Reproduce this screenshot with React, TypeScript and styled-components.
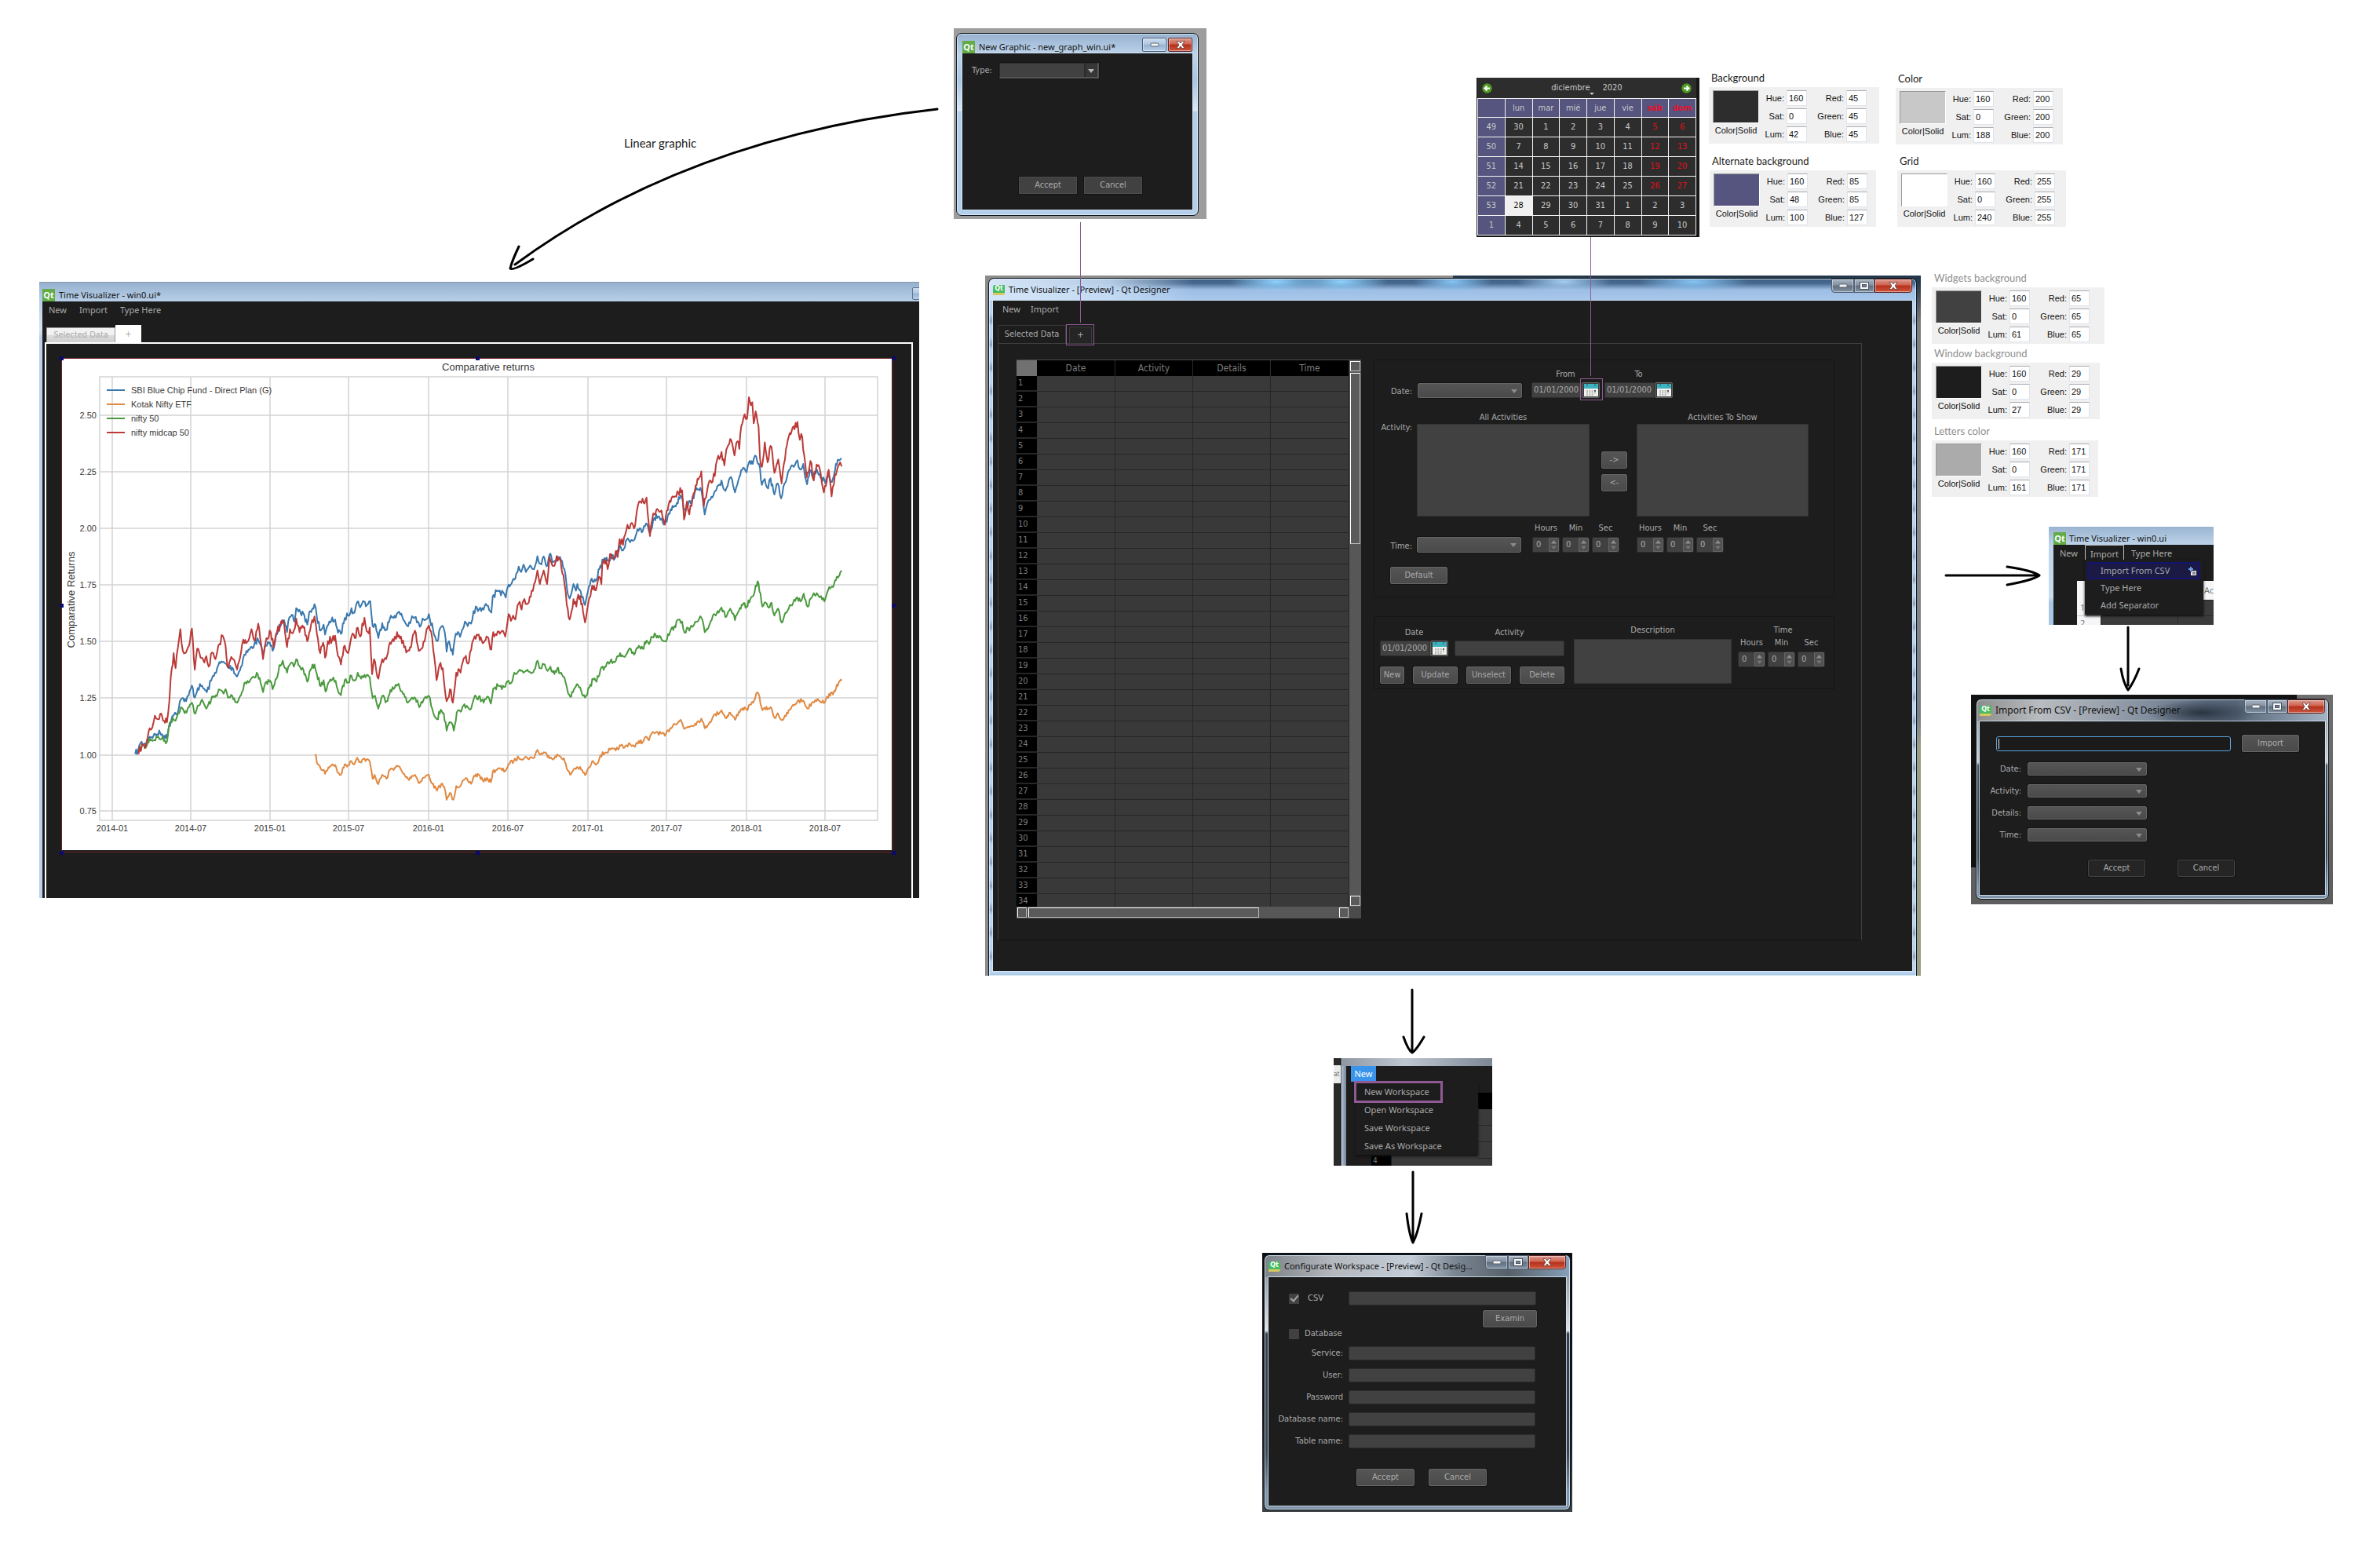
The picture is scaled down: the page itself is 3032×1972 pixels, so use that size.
import React from 'react';
import styled, { createGlobalStyle, css } from 'styled-components';

/* ---------- tokens ---------- */
const ink = '#ababab';
const base = '#1d1d1d';
const widget = '#414141';
const mark = '#8f5a93';
const tahoma = `'DejaVu Sans Condensed', 'Noto Sans', sans-serif`;
const segoe = `'Noto Sans', 'Open Sans', sans-serif`;
const verdana = `'DejaVu Sans', sans-serif`;
const arial = `'Liberation Sans', Arial, sans-serif`;
const calibri = `Lato, 'Noto Sans', sans-serif`;

const Global = createGlobalStyle`
  * { box-sizing: border-box; }
  body { margin: 0; background: #fff; font-family: ${tahoma}; font-size: 11px; line-height: 16px; }
  button, input, select, textarea { font: inherit; margin: 0; padding: 0; border-radius: 0; outline: none; }
`;

const Board = styled.main`
  position: relative;
  min-height: 100vh;
  overflow: hidden;
`;

const Pin = styled.section<{ $x: number; $y: number; $w?: number }>`
  position: absolute;
  left: ${p => p.$x}px;
  top: ${p => p.$y}px;
  ${p => p.$w && `width: ${p.$w}px;`}
`;

const Arrows = styled.svg`
  position: absolute;
  left: 0;
  top: 0;
  width: 100%;
  height: 100%;
  overflow: visible;
  pointer-events: none;
`;

const Highlight = styled.div<{ $x: number; $y: number; $w: number; $h: number; $line?: number }>`
  position: absolute;
  left: ${p => p.$x}px;
  top: ${p => p.$y}px;
  width: ${p => p.$w}px;
  height: ${p => p.$h}px;
  border: ${p => p.$line || 1}px solid ${mark};
  pointer-events: none;
`;

const Note = styled.p<{ $tone?: string; $size?: number }>`
  margin: 0;
  font-family: ${calibri};
  font-size: ${p => p.$size || 13}px;
  line-height: 20px;
  color: ${p => p.$tone || '#1b1b1b'};
  white-space: nowrap;
`;

/* ---------- window chrome ---------- */
type Glass = 'blue' | 'wide' | 'smoke' | 'steel';

const glass: Record<Glass, ReturnType<typeof css>> = {
  blue: css`background: linear-gradient(#96b1cf 0, #bdd3ea 26px, #a9c6e4 60px, #dbe8f6 98px, #b5cfea 99px, #b5cfea);`,
  wide: css`background:
    radial-gradient(60px 14px at 31% 4px, #8fd2ff, transparent),
    radial-gradient(60px 14px at 38% 4px, #8fd2ff, transparent),
    radial-gradient(50px 14px at 50% 4px, #86c4f4, transparent),
    radial-gradient(60px 14px at 62% 4px, #a5cdf3, transparent),
    radial-gradient(70px 14px at 76% 4px, #86c4f4, transparent),
    linear-gradient(90deg, #d6e6f8 0, rgba(200,222,245,.85) 13%, transparent 22%) 0 0 / 100% 28px no-repeat,
    linear-gradient(#3f5f82 0, #47698f 6px, #9dbde3 14px, #a9c8ec 28px) 0 0 / 100% 28px no-repeat,
    repeating-linear-gradient(#b9d4f1 0, #b9d4f1 14px, #8a9fbc 24px, #b9d4f1 30px);`,
  smoke: css`background:
    radial-gradient(70px 16px at 64% 17px, #2b3542, transparent),
    linear-gradient(90deg, #8c8c8c 0, #b9bcc0 18%, #8a95a3 45%, #5b6b7f 66%, #566578 74%, #a5b5c6 100%) 0 0 / 100% 28px no-repeat,
    linear-gradient(#8f98a2 0, #c9ced4 80px, #47525f 84px, #3b4653 200px, #7e93a8 240px);`,
  steel: css`background:
    linear-gradient(90deg, #7d8288 0, #b4b8bd 22%, #c4cdd8 48%, #7b8793 62%, #566069 80%, #87a0bb 100%) 0 0 / 100% 28px no-repeat,
    linear-gradient(#7b828a 0, #e0e2e5 96px, #35404c 100px, #38444f 250px, #7f93a9 300px);`,
};

const Backdrop = styled.div<{ $pad: string; $bg: string }>`
  padding: ${p => p.$pad};
  background: ${p => p.$bg};
`;

const Frame = styled.article<{ $glass: Glass; $side: number; $foot: number; $open?: boolean }>`
  border: 1px solid #10161c;
  ${p => p.$open && 'border-bottom: 0;'}
  border-radius: ${p => (p.$open ? '7px 7px 0 0' : '7px')};
  padding: 0 ${p => p.$side}px ${p => p.$foot}px;
  ${p => glass[p.$glass]}
  box-shadow: inset 0 0 0 1px rgba(225, 244, 255, 0.75);
`;

const TitleBar = styled.header<{ $h: number; $low?: boolean }>`
  display: flex;
  align-items: ${p => (p.$low ? 'flex-end' : 'center')};
  gap: 5px;
  height: ${p => p.$h}px;
`;

const Title = styled.h2<{ $size?: number }>`
  flex: 1;
  min-width: 0;
  margin: 0;
  font-family: ${segoe};
  font-size: ${p => p.$size || 12}px;
  font-weight: 400;
  line-height: 16px;
  color: #111;
  white-space: nowrap;
`;

const Client = styled.div<{ $h?: number; $font?: string }>`
  min-height: ${p => p.$h || 0}px;
  background: ${base};
  color: ${ink};
  font-family: ${p => p.$font || tahoma};
  box-shadow: 0 0 0 1px rgba(215, 233, 246, 0.8);
`;

const QtBadge = styled.span`
  display: grid;
  place-items: center;
  width: 16px;
  height: 16px;
  background: #62ab46;
  color: #fff;
  font: 700 11px/16px ${segoe};
`;

const PreviewBadge = styled.span`
  display: grid;
  place-items: center;
  width: 15px;
  height: 13px;
  border-radius: 3px 0 3px 0;
  border-bottom: 3px solid #d8c95e;
  background: #45bd62;
  color: #fff;
  font: 700 8px/10px ${verdana};
`;

const Controls = styled.div<{ $joined?: boolean }>`
  display: flex;
  align-self: flex-start;
  gap: ${p => (p.$joined ? 0 : 2)}px;
  margin-top: ${p => (p.$joined ? 0 : 5)}px;
`;

const CtlButton = styled.button<{ $w: number; $kind: 'plain' | 'pale' | 'close'; $edge?: 'l' | 'r' | 'all' }>`
  display: grid;
  place-items: center;
  width: ${p => p.$w}px;
  height: 18px;
  border: 1px solid ${p => (p.$kind === 'close' ? '#5d2420' : '#4d5f75')};
  border-radius: ${p => (p.$edge === 'all' ? '2px' : p.$edge === 'l' ? '0 0 0 4px' : p.$edge === 'r' ? '0 0 4px 0' : '0')};
  box-shadow: inset 0 0 0 1px rgba(255, 255, 255, 0.45);
  background: ${p =>
    p.$kind === 'close'
      ? 'linear-gradient(#dd9a8e 0, #d0604e 45%, #b3301c 50%, #d0543b)'
      : p.$kind === 'pale'
        ? 'linear-gradient(#c8dbf0 0, #b3cae4 45%, #96b2d2 50%, #b4cee9)'
        : 'linear-gradient(#a5b1bf 0, #8592a1 45%, #5f6d7e 50%, #8494a5)'};
`;

const MinIcon = () => (
  <svg width="12" height="6" viewBox="0 0 12 6"><rect x="1" y="1" width="10" height="4" rx="1" fill="#f4f4f4" stroke="#5b6470" /></svg>
);
const MaxIcon = () => (
  <svg width="12" height="10" viewBox="0 0 12 10">
    <rect x="0.5" y="0.5" width="11" height="9" fill="#f7f7f7" stroke="#4a5260" />
    <rect x="3.5" y="3.5" width="5" height="3" fill="#76859a" stroke="#4a5260" />
  </svg>
);
const CloseIcon = () => (
  <svg width="12" height="10" viewBox="0 0 12 10">
    <path d="M1 .5h3L6 3 8 .5h3L8 5l3 4.500H8L6 7 4 9.500H1L4 5z" fill="#fff" stroke="#57413e" strokeWidth="0.8" />
  </svg>
);

const TripleControls = () => (
  <Controls $joined>
    <CtlButton type="button" aria-label="Minimize" $w={29} $kind="plain" $edge="l"><MinIcon /></CtlButton>
    <CtlButton type="button" aria-label="Maximize" $w={26} $kind="plain"><MaxIcon /></CtlButton>
    <CtlButton type="button" aria-label="Close" $w={48} $kind="close" $edge="r"><CloseIcon /></CtlButton>
  </Controls>
);

/* ---------- widgets ---------- */
const raised = css`
  border: 1px solid #666;
  border-radius: 2px;
  background: linear-gradient(#555, #4a4a4a);
  box-shadow: 0 0 0 1px #141414;
  color: ${ink};
`;

const Button = styled.button<{ $w: number; $look?: 'flat' | 'dark' }>`
  width: ${p => p.$w}px;
  height: 22px;
  line-height: 16px;
  text-align: center;
  ${raised}
  ${p => p.$look === 'flat' && css`background: ${widget}; border-color: #4c4c4c; border-radius: 0;`}
  ${p => p.$look === 'dark' && css`background: #252525; border-color: #444;`}
`;

const PickWrap = styled.span<{ $w: number; $h: number; $boxed?: boolean }>`
  position: relative;
  display: block;
  width: ${p => p.$w}px;
  height: ${p => p.$h}px;
  &::after {
    content: '';
    position: absolute;
    right: 6px;
    top: 50%;
    margin-top: -2px;
    border: 4px solid transparent;
    border-top: 5px solid ${p => (p.$boxed ? '#b5b5b5' : '#8c8c8c')};
    border-bottom: 0;
    pointer-events: none;
  }
`;

const Pick = styled.select<{ $boxed?: boolean }>`
  display: block;
  appearance: none;
  width: 100%;
  height: 100%;
  ${raised}
  ${p => p.$boxed && css`
    border: 1px solid #2d2d2d;
    border-right: 2px solid #555;
    border-bottom: 2px solid #555;
    border-radius: 0;
    background: linear-gradient(90deg, ${widget} 0 107px, #2a2a2a 107px 109px, #373737 109px);
  `}
`;

const Combo = ({ id, w, h, boxed }: { id: string; w: number; h: number; boxed?: boolean }) => (
  <PickWrap $w={w} $h={h} $boxed={boxed}><Pick id={id} $boxed={boxed} /></PickWrap>
);

const Field = styled.input<{ $w?: number; $h?: number }>`
  display: block;
  width: ${p => (p.$w ? p.$w + 'px' : '100%')};
  height: ${p => p.$h || 20}px;
  border: 1px solid #2b2b2b;
  border-radius: 2px;
  background: ${widget};
  color: ${ink};
`;

const List = styled.select`
  display: block;
  width: 100%;
  height: 118px;
  border: 1px solid #333;
  background: ${widget};
  overflow: hidden;
`;

const Memo = styled.textarea`
  display: block;
  width: 100%;
  height: 57px;
  border: 1px solid #333;
  background: ${widget};
  resize: none;
`;

const Label = styled.label<{ $center?: boolean }>`
  display: block;
  line-height: 16px;
  text-align: ${p => (p.$center ? 'center' : 'right')};
  white-space: nowrap;
`;

const SpinBox = styled.span`
  display: flex;
  width: 35px;
  height: 20px;
  border: 1px solid #2b2b2b;
  border-radius: 2px;
  background: ${widget};
`;

const SpinInput = styled.input`
  flex: 1;
  min-width: 0;
  padding-left: 4px;
  border: 0;
  background: none;
  color: ${ink};
  appearance: textfield;
  &::-webkit-inner-spin-button { display: none; }
`;

const Steps = styled.span`
  display: grid;
  place-items: center;
  width: 13px;
  border: 1px solid #666;
  border-radius: 0 2px 2px 0;
  background: #505050;
`;

const Spin = ({ id }: { id: string }) => (
  <SpinBox>
    <SpinInput id={id} type="number" defaultValue={0} />
    <Steps>
      <svg width="9" height="14" viewBox="0 0 9 14"><path d="M4.500 1 8 5.500H1z" fill="#8e8e8e" /><path d="M4.500 13 8 8.500H1z" fill="#747474" /></svg>
    </Steps>
  </SpinBox>
);

const Stack = styled.div<{ $gap?: number }>`
  display: flex;
  flex-direction: column;
  gap: ${p => p.$gap || 0}px;
`;

const SpinSet = styled.div`
  display: grid;
  grid-template-columns: repeat(3, 35px);
  gap: 3px;
`;

const Spins = ({ id }: { id: string }) => (
  <SpinSet>
    <Label $center htmlFor={id + 'h'}>Hours</Label>
    <Label $center htmlFor={id + 'm'}>Min</Label>
    <Label $center htmlFor={id + 's'}>Sec</Label>
    <Spin id={id + 'h'} />
    <Spin id={id + 'm'} />
    <Spin id={id + 's'} />
  </SpinSet>
);

const DateBox = styled.span`
  display: flex;
  width: 87px;
  height: 20px;
`;
const DateInput = styled.input`
  width: 64px;
  padding-left: 2px;
  border: 1px solid #2b2b2b;
  background: ${widget};
  color: ${ink};
`;
const DateButton = styled.button`
  display: grid;
  place-items: center;
  width: 23px;
  border: 1px solid #666;
  border-radius: 2px;
  background: #3d3d3d;
`;

const DatePick = ({ id }: { id: string }) => (
  <DateBox>
    <DateInput id={id} defaultValue="01/01/2000" />
    <DateButton type="button" aria-label="Open calendar">
      <svg width="18" height="16" viewBox="0 0 18 16">
        <rect width="18" height="16" fill="#f1f1ee" />
        <rect width="18" height="6" fill="#3fb2bf" />
        <path d="M4 0v3M14 0v3" stroke="#1d6570" strokeWidth="1" />
        <path d="M3 9h12M3 11.500h12M3 14h9" stroke="#a5a5a5" strokeWidth="1.500" strokeDasharray="2 1.300" />
        <path d="M13 9h2" stroke="#333" strokeWidth="1.500" />
      </svg>
    </DateButton>
  </DateBox>
);

/* ---------- menus ---------- */
const MenuBar = styled.nav<{ $gap?: number; $left?: number }>`
  display: flex;
  align-items: center;
  gap: ${p => p.$gap || 13}px;
  height: 22px;
  padding-left: ${p => p.$left || 8}px;
  font-family: ${segoe};
`;
const MenuItem = styled.a`
  color: ${ink};
  text-decoration: none;
  white-space: nowrap;
`;

/* ---------- main window ---------- */
const Tabs = styled.div`
  display: flex;
  align-items: flex-end;
  gap: 4px;
  margin-top: 9px;
  padding-left: 6px;
`;
const Tab = styled.button<{ $w: number; $on?: boolean }>`
  width: ${p => p.$w}px;
  height: ${p => (p.$on ? 23 : 21)}px;
  border: 1px solid #3b3b3b;
  border-bottom: 0;
  border-radius: 2px 2px 0 0;
  background: ${p => (p.$on ? base : '#252525')};
  color: ${ink};
  text-align: center;
`;
const Pane = styled.div`
  display: flex;
  gap: 16px;
  margin: 0 64px 0 6px;
  height: 761px;
  padding: 20px 0 0 23px;
  border: 1px solid #3f3f3f;
  border-bottom-color: #131313;
`;
const SheetBox = styled.div`
  display: grid;
  grid-template-columns: 424px 15px;
  grid-template-rows: 696px 15px;
  height: 712px;
  border-top: 1px solid #4a4a4a;
`;
const SheetClip = styled.div`
  overflow: hidden;
`;
const Sheet = styled.table`
  width: 100%;
  table-layout: fixed;
  border-collapse: separate;
  border-spacing: 0;
  color: #7c7c7c;
  thead th {
    height: 20px;
    padding: 0;
    border-right: 1px solid #2b2b2b;
    background: #000;
    font-size: 12px;
    font-weight: 400;
  }
  thead td { padding: 0; background: #717171; }
  tbody th {
    height: 20px;
    padding: 0 0 0 2px;
    border-bottom: 2px solid #262626;
    background: #000;
    font-size: 11px;
    font-weight: 400;
    text-align: left;
    line-height: 16px;
  }
  tbody td {
    padding: 0;
    border-right: 1px solid #262626;
    border-bottom: 1px solid #262626;
    background: #393939;
  }
`;
const VTrack = styled.div`
  display: flex;
  flex-direction: column;
  padding: 1px;
  background: #575757;
`;
const HTrack = styled.div`
  display: flex;
  gap: 2px;
  padding: 1px;
  background: #575757;
`;
const Corner = styled.div`background: #4b4b4b;`;
const Knob = styled.div<{ $long?: number; $axis: 'x' | 'y'; $push?: boolean }>`
  ${p => (p.$axis === 'y' ? `height: ${p.$long || 13}px; width: 13px;` : `width: ${p.$long || 12}px; height: 13px;`)}
  ${p => p.$push && (p.$axis === 'y' ? 'margin-top: auto;' : 'margin-left: auto;')}
  ${p => p.$axis === 'y' && !p.$push && 'margin-bottom: 2px;'}
  border: 1px solid #fff;
  border-right-color: #bbb;
  border-bottom-color: #bbb;
  background: #5a5a5a;
`;

const Panels = styled.div`
  width: 587px;
`;
const Group = styled.form<{ $pad: string }>`
  padding: ${p => p.$pad};
  border: 1px solid #151515;
`;
const Line = styled.div<{ $cols: string; $mt?: number; $align?: string }>`
  display: grid;
  grid-template-columns: ${p => p.$cols};
  align-items: ${p => p.$align || 'end'};
  margin-top: ${p => p.$mt || 0}px;
`;
const MoveButtons = styled(Stack)`
  padding-top: 51px;
`;
const ListLabel = styled(Label)`
  padding-top: 13px;
`;
const Editor = styled.div`
  display: grid;
  grid-template-columns: 235px 201px 111px;
  column-gap: 12px;
  align-items: end;
  width: max-content;
`;
const EditorTime = styled(Stack)`
  align-self: start;
  margin-left: -4px;
`;
const Pair = styled.div`
  display: grid;
  grid-template-columns: 87px 140px;
  gap: 2px 8px;
`;
const ButtonRow = styled.div<{ $gap: number; $mt?: number; $left?: number }>`
  display: flex;
  gap: ${p => p.$gap}px;
  margin-top: ${p => p.$mt || 0}px;
  padding-left: ${p => p.$left || 0}px;
`;

const MainWindow = () => (
  <Pin $x={1255} $y={351} $w={1192}>
    <Backdrop $pad="3px 5px 0 4px" $bg="linear-gradient(90deg, #8b8b8b 0 50%, transparent 50%), linear-gradient(#24384c 0 8px, #7d7d7d 60px, #8a8a8a 300px, #77808a 560px, #9c9d86 600px, #9c9d86)">
      <Frame $glass="wide" $side={5} $foot={6} $open>
        <TitleBar $h={28}>
          <PreviewBadge>Qt</PreviewBadge>
          <Title $size={11}>Time Visualizer - [Preview] - Qt Designer</Title>
          <TripleControls />
        </TitleBar>
        <Client $h={854}>
          <MenuBar $left={12}>
            <MenuItem href="#new">New</MenuItem>
            <MenuItem href="#import">Import</MenuItem>
          </MenuBar>
          <Tabs>
            <Tab type="button" $w={87} $on>Selected Data</Tab>
            <Tab type="button" $w={29}>+</Tab>
          </Tabs>
          <Pane>
            <SheetBox>
              <SheetClip>
                <Sheet>
                  <colgroup><col width="26" /><col width="100" /><col width="99" /><col width="99" /><col width="100" /></colgroup>
                  <thead>
                    <tr><td />{['Date', 'Activity', 'Details', 'Time'].map(t => <th key={t} scope="col">{t}</th>)}</tr>
                  </thead>
                  <tbody>
                    {Array.from({ length: 34 }, (_, i) => (
                      <tr key={i}><th scope="row">{i + 1}</th><td /><td /><td /><td /></tr>
                    ))}
                  </tbody>
                </Sheet>
              </SheetClip>
              <VTrack><Knob $axis="y" /><Knob $axis="y" $long={218} /><Knob $axis="y" $push /></VTrack>
              <HTrack><Knob $axis="x" /><Knob $axis="x" $long={294} /><Knob $axis="x" $push /></HTrack>
              <Corner />
            </SheetBox>
            <Panels>
              <Group $pad="10px 0 16px">
                <Line $cols="48px 7px 133px 12px 87px 6px 87px">
                  <Label htmlFor="fDate">Date:</Label><span />
                  <Combo id="fDate" w={133} h={19} /><span />
                  <Stack $gap={2}><Label $center htmlFor="from">From</Label><DatePick id="from" /></Stack><span />
                  <Stack $gap={2}><Label $center htmlFor="to">To</Label><DatePick id="to" /></Stack>
                </Line>
                <Line $cols="48px 6px 220px 15px 33px 12px 219px" $mt={17} $align="start">
                  <ListLabel htmlFor="all">Activity:</ListLabel><span />
                  <Stack><Label $center htmlFor="all">All Activities</Label><List id="all" multiple /></Stack><span />
                  <MoveButtons $gap={7}>
                    <Button type="button" $w={33}>-&gt;</Button>
                    <Button type="button" $w={33}>&lt;-</Button>
                  </MoveButtons><span />
                  <Stack><Label $center htmlFor="shown">Activities To Show</Label><List id="shown" multiple /></Stack>
                </Line>
                <Line $cols="48px 6px 133px 14px 111px 22px 111px" $mt={7}>
                  <Label htmlFor="fTime">Time:</Label><span />
                  <Combo id="fTime" w={133} h={20} /><span />
                  <Spins id="a" /><span />
                  <Spins id="b" />
                </Line>
                <ButtonRow $gap={0} $mt={18} $left={20}><Button type="button" $w={73}>Default</Button></ButtonRow>
              </Group>
              <Line $cols="1fr" $mt={24}>
                <Group $pad="9px 0 6px 7px">
                  <Editor>
                    <div>
                      <Pair>
                        <Label $center htmlFor="eDate">Date</Label>
                        <Label $center htmlFor="eAct">Activity</Label>
                        <DatePick id="eDate" />
                        <Field id="eAct" />
                      </Pair>
                      <ButtonRow $gap={11} $mt={13}>
                        <Button type="button" $w={31}>New</Button>
                        <Button type="button" $w={57}>Update</Button>
                        <Button type="button" $w={57}>Unselect</Button>
                        <Button type="button" $w={57}>Delete</Button>
                      </ButtonRow>
                    </div>
                    <Stack $gap={3}><Label $center htmlFor="desc">Description</Label><Memo id="desc" /></Stack>
                    <EditorTime><Label as="span" $center>Time</Label><Spins id="c" /></EditorTime>
                  </Editor>
                </Group>
              </Line>
            </Panels>
          </Pane>
        </Client>
      </Frame>
    </Backdrop>
  </Pin>
);

/* ---------- new graphic dialog ---------- */
const GraphForm = styled.form`
  display: flex;
  flex-direction: column;
  justify-content: space-between;
  height: 199px;
  padding: 12px 0 20px 12px;
`;
const InlineRow = styled.div<{ $gap: number }>`
  display: flex;
  align-items: center;
  gap: ${p => p.$gap}px;
`;

const GraphWindow = () => (
  <Pin $x={1215} $y={36} $w={322}>
    <Backdrop $pad="6px 10px 4px 3px" $bg="#9d9d9d">
      <Frame $glass="blue" $side={7} $foot={7}>
        <TitleBar $h={25} $low>
          <QtBadge>Qt</QtBadge>
          <Title $size={11}>New Graphic - new_graph_win.ui*</Title>
          <Controls>
            <CtlButton type="button" aria-label="Minimize" $w={31} $kind="pale" $edge="all"><MinIcon /></CtlButton>
            <CtlButton type="button" aria-label="Close" $w={31} $kind="close" $edge="all"><CloseIcon /></CtlButton>
          </Controls>
        </TitleBar>
        <Client>
          <GraphForm>
            <InlineRow $gap={9}>
              <Label htmlFor="type">Type:</Label>
              <Combo id="type" w={127} h={20} boxed />
            </InlineRow>
            <ButtonRow $gap={9} $left={60}>
              <Button type="button" $w={74} $look="flat">Accept</Button>
              <Button type="button" $w={74} $look="flat">Cancel</Button>
            </ButtonRow>
          </GraphForm>
        </Client>
      </Frame>
    </Backdrop>
  </Pin>
);

/* ---------- calendar ---------- */
const CalBox = styled.div`
  padding: 0 4px 2px 1px;
  background: #161616;
  color: #c8c8c8;
`;
const CalHead = styled.div`
  display: flex;
  align-items: center;
  justify-content: space-between;
  height: 26px;
  padding: 0 6px;
  background: #2d2d2d;
`;
const CalTitle = styled.div`
  display: flex;
  align-items: center;
  gap: 16px;
`;
const Month = styled.span`
  position: relative;
  &::after {
    content: '';
    position: absolute;
    right: -6px;
    bottom: -1px;
    border: 3px solid transparent;
    border-top-color: #c8c8c8;
    border-bottom: 0;
  }
`;
const RoundButton = styled.button`
  display: grid;
  width: 13px;
  height: 13px;
  border: 0;
  background: none;
`;
const CalTable = styled.table`
  width: 100%;
  table-layout: fixed;
  border-collapse: collapse;
  font-size: 11px;
  th, td {
    height: 25px;
    padding: 0;
    border: 1px solid #f4f4f4;
    background: #2d2d2d;
    font-weight: 400;
    text-align: center;
  }
  th { background: #55557f; }
  thead th { height: 24px; }
`;
const DayCell = styled.td<{ $red?: boolean; $on?: boolean }>`
  ${p => p.$red && 'color: #e0101c;'}
  && { ${p => p.$on && 'background: #f0f0f0; color: #111;'} }
`;
const DayHead = styled.th<{ $red?: boolean }>`
  ${p => p.$red && 'color: #e8102a; && { font-weight: 700; }'}
`;
const weeks: [number, number[]][] = [
  [49, [30, 1, 2, 3, 4, 5, 6]],
  [50, [7, 8, 9, 10, 11, 12, 13]],
  [51, [14, 15, 16, 17, 18, 19, 20]],
  [52, [21, 22, 23, 24, 25, 26, 27]],
  [53, [28, 29, 30, 31, 1, 2, 3]],
  [1, [4, 5, 6, 7, 8, 9, 10]],
];
const ArrowDot = ({ flip }: { flip?: boolean }) => (
  <svg width="13" height="13" viewBox="0 0 13 13">
    <circle cx="6.500" cy="6.500" r="6.200" fill="#4f9a22" />
    <path d={flip ? 'M3 6.500h6M6.500 3.500l3 3-3 3' : 'M10 6.500H4M6.500 3.500l-3 3 3 3'} fill="none" stroke="#fff" strokeWidth="2" />
  </svg>
);
const Calendar = () => (
  <Pin $x={1881} $y={99} $w={284}>
    <CalBox>
      <CalHead>
        <RoundButton type="button" aria-label="Previous month"><ArrowDot /></RoundButton>
        <CalTitle><Month>diciembre</Month><span>2020</span></CalTitle>
        <RoundButton type="button" aria-label="Next month"><ArrowDot flip /></RoundButton>
      </CalHead>
      <CalTable>
        <thead>
          <tr><th />{['lun', 'mar', 'mié', 'jue', 'vie', 'sáb', 'dom'].map((d, i) => <DayHead key={d} scope="col" $red={i > 4}>{d}</DayHead>)}</tr>
        </thead>
        <tbody>
          {weeks.map(([w, days], r) => (
            <tr key={w}>
              <th scope="row">{w}</th>
              {days.map((d, i) => <DayCell key={i} $red={i > 4 && r < 4} $on={r === 4 && i === 0}>{d}</DayCell>)}
            </tr>
          ))}
        </tbody>
      </CalTable>
    </CalBox>
  </Pin>
);

/* ---------- colour cards ---------- */
const Card = styled.div`
  display: flex;
  height: 72px;
  padding: 4px 0 0 5px;
  background: #f0f0f0;
  color: #111;
  font-family: ${arial};
`;
const SwatchBox = styled.figure`
  width: 59px;
  margin: 0;
  text-align: center;
  font-size: 11px;
  line-height: 14px;
`;
const Swatch = styled.div<{ $c: string }>`
  height: 42px;
  margin-bottom: 2px;
  border: 1px solid #fff;
  border-top-color: #999;
  border-left-color: #999;
  background: ${p => p.$c};
`;
const Values = styled.div`
  display: grid;
  grid-template-columns: 35px 26px 50px 26px;
  grid-auto-rows: 20px;
  gap: 3px 0;
  align-content: start;
  align-items: center;
`;
const ValueLabel = styled.label`
  padding-right: 3px;
  text-align: right;
`;
const ValueInput = styled.input`
  width: 26px;
  height: 20px;
  padding-left: 2px;
  border: 1px solid #dfe3ea;
  border-top-color: #a9acb3;
  background: #fff;
  color: #111;
`;
type CardSpec = { name: string; x: number; y: number; w: number; tone?: string; color: string; v: number[] };
const cards: CardSpec[] = [
  { name: 'Background', x: 2177, y: 89, w: 217, color: '#2d2d2d', v: [160, 45, 0, 45, 42, 45] },
  { name: 'Alternate background', x: 2178, y: 195, w: 212, color: '#55557f', v: [160, 85, 48, 85, 100, 127] },
  { name: 'Color', x: 2415, y: 90, w: 213, color: '#c8c8c8', v: [160, 200, 0, 200, 188, 200] },
  { name: 'Grid', x: 2417, y: 195, w: 215, color: '#ffffff', v: [160, 255, 0, 255, 240, 255] },
  { name: 'Widgets background', x: 2461, y: 344, w: 220, tone: '#8f8f8f', color: '#414141', v: [160, 65, 0, 65, 61, 65] },
  { name: 'Window background', x: 2461, y: 440, w: 214, tone: '#8f8f8f', color: '#1d1d1d', v: [160, 29, 0, 29, 27, 29] },
  { name: 'Letters color', x: 2461, y: 539, w: 212, tone: '#8f8f8f', color: '#ababab', v: [160, 171, 0, 171, 161, 171] },
];
const CardNote = styled(Note)`
  padding: 0 0 2px 3px;
`;
const labels = ['Hue:', 'Red:', 'Sat:', 'Green:', 'Lum:', 'Blue:'];
const ColorCard = ({ spec }: { spec: CardSpec }) => (
  <Pin $x={spec.x} $y={spec.y} $w={spec.w}>
    <CardNote $tone={spec.tone}>{spec.name}</CardNote>
    <Card>
      <SwatchBox><Swatch $c={spec.color} /><figcaption>Color|Solid</figcaption></SwatchBox>
      <Values>
        {labels.map((l, i) => {
          const id = spec.name.replace(/ /g, '') + i;
          return (
            <React.Fragment key={l}>
              <ValueLabel htmlFor={id}>{l}</ValueLabel>
              <ValueInput id={id} defaultValue={spec.v[i]} />
            </React.Fragment>
          );
        })}
      </Values>
    </Card>
  </Pin>
);

/* ---------- import menu snippet ---------- */
const Snip = styled.div<{ $h: number }>`
  position: relative;
  height: ${p => p.$h}px;
  overflow: hidden;
  background: linear-gradient(#9ab4d0, #bed4ea 24px, #c9dcf0 90px, #a9c6e4 96px);
`;
const SnipTitle = styled(TitleBar)`
  gap: 4px;
  padding-left: 6px;
`;
const SnipClient = styled.div<{ $h: number }>`
  height: ${p => p.$h}px;
  margin-left: 6px;
  background: ${base};
  color: ${ink};
  font-family: ${segoe};
`;
const OpenItem = styled(MenuItem)`
  align-self: stretch;
  padding: 3px 6px 0;
  border: 1px solid #bdbdbd;
  border-bottom: 0;
  line-height: 16px;
`;
const DropMenu = styled.div<{ $x: number; $y: number; $w: number }>`
  position: absolute;
  left: ${p => p.$x}px;
  top: ${p => p.$y}px;
  width: ${p => p.$w}px;
  background: ${base};
  color: ${ink};
  font-family: ${segoe};
  box-shadow: 0 2px 3px #111;
`;
const DropItem = styled.a<{ $on?: boolean; $h: number; $left: number }>`
  display: flex;
  align-items: center;
  justify-content: space-between;
  height: ${p => p.$h}px;
  margin: 0 4px 0 3px;
  padding: 0 3px 0 ${p => p.$left}px;
  border: ${p => (p.$on ? '2px solid #14146e' : '0 solid')};
  background: ${p => (p.$on ? '#1a1a44' : 'none')};
  color: ${ink};
  text-decoration: none;
  white-space: nowrap;
`;
const DropPad = styled.div`
  padding: 3px 0 1px;
`;
const MiniSheet = styled.table`
  width: 174px;
  margin: 24px 0 0 30px;
  border-collapse: collapse;
  table-layout: fixed;
  color: #777;
  font-size: 11px;
  line-height: 16px;
  th { height: 24px; padding: 0 0 0 4px; background: #f6f6f8; font-weight: 400; text-align: left; }
  thead th:last-child { padding-left: 34px; }
  td { height: 20px; padding: 0; background: #3b3b3b; border: 1px solid #2a2a2a; }
  tbody th { height: 20px; border-bottom: 1px solid #ccc; }
`;
const ActionIcon = () => (
  <svg width="11" height="11" viewBox="0 0 11 11">
    <path d="M3 0h2v2h2v2H5v2H3V4H1V2h2z" fill="#6f9fe0" />
    <path d="M5 5h6v6H4V7h1z" fill="#f1f1f1" /><path d="M6 7h4M6 9h4" stroke="#223" />
  </svg>
);
const ImportMenu = () => (
  <Pin $x={2610} $y={671} $w={210}>
    <Snip $h={125}>
      <SnipTitle $h={23} $low><QtBadge>Qt</QtBadge><Title $size={11}>Time Visualizer - win0.ui</Title></SnipTitle>
      <SnipClient $h={102}>
        <MenuBar $gap={9}>
          <MenuItem href="#new">New</MenuItem>
          <OpenItem href="#import">Import</OpenItem>
          <MenuItem href="#type">Type Here</MenuItem>
        </MenuBar>
        <MiniSheet>
          <colgroup><col width="30" /><col width="98" /><col width="46" /></colgroup>
          <thead><tr><th /><th /><th>Ac</th></tr></thead>
          <tbody><tr><th>1</th><td /><td /></tr><tr><th>2</th><td /><td /></tr></tbody>
        </MiniSheet>
      </SnipClient>
      <DropMenu $x={46} $y={42} $w={151}>
        <DropPad>
          <DropItem href="#csv" $on $h={22} $left={15}>Import From CSV<ActionIcon /></DropItem>
          <DropItem href="#type2" $h={22} $left={17}>Type Here</DropItem>
          <DropItem href="#sep" $h={22} $left={17}>Add Separator</DropItem>
        </DropPad>
      </DropMenu>
    </Snip>
  </Pin>
);

/* ---------- import dialog ---------- */
const ImportForm = styled.form`
  padding: 17px 0 23px;
`;
const PathRow = styled.div`
  display: flex;
  align-items: center;
  gap: 14px;
  padding-left: 21px;
`;
const PathField = styled(Field)`
  && {
    border: 1px solid #5aa3e0;
    border-radius: 3px;
    background: #1b1b1b;
  }
`;
const Caret = styled.span`
  position: absolute;
  left: 3px;
  top: 3px;
  width: 1px;
  height: 13px;
  background: #e8e8e8;
`;
const PathWrap = styled.span`
  position: relative;
`;
const ColumnGrid = styled.div`
  display: grid;
  grid-template-columns: 53px 152px;
  grid-auto-rows: 17px;
  gap: 11px 8px;
  align-items: center;
  margin: 13px 0 23px;
`;
const ImportWindow = () => (
  <Pin $x={2511} $y={885} $w={461}>
    <Backdrop $pad="5px 5px 6px 6px" $bg="linear-gradient(90deg, #121212 0 90%, transparent 90%) 0 0 / 100% 220px no-repeat, linear-gradient(#6e6e6e, #5d5d5d)">
      <Frame $glass="smoke" $side={4} $foot={5}>
        <TitleBar $h={28}>
          <PreviewBadge>Qt</PreviewBadge>
          <Title $size={12}>Import From CSV - [Preview] - Qt Designer</Title>
          <TripleControls />
        </TitleBar>
        <Client $h={221}>
          <ImportForm>
            <PathRow>
              <PathWrap><PathField aria-label="CSV file" $w={299} $h={19} /><Caret /></PathWrap>
              <Button type="button" $w={73}>Import</Button>
            </PathRow>
            <ColumnGrid>
              {['Date:', 'Activity:', 'Details:', 'Time:'].map(t => (
                <React.Fragment key={t}><Label htmlFor={'i' + t}>{t}</Label><Combo id={'i' + t} w={152} h={17} /></React.Fragment>
              ))}
            </ColumnGrid>
            <ButtonRow $gap={41} $left={138}>
              <Button type="button" $w={73} $look="dark">Accept</Button>
              <Button type="button" $w={73} $look="dark">Cancel</Button>
            </ButtonRow>
          </ImportForm>
        </Client>
      </Frame>
    </Backdrop>
  </Pin>
);

/* ---------- new menu snippet ---------- */
const DarkSnip = styled(Snip)`
  display: flex;
  background:
    linear-gradient(90deg, #8e97a3, #bfc7d1 40%, #77828f) 10px 0 / 100% 10px no-repeat,
    linear-gradient(90deg, #2a2a2a 0 8px, #111 8px 9px, #b5c3d2 10px, #7d8ea2 15px);
`;
const Strip = styled.div`
  width: 9px;
  padding-top: 9px;
`;
const StripCell = styled.div`
  background: #ececec;
  color: #666;
  font-size: 8px;
  line-height: 23px;
`;
const DarkClient = styled.div`
  flex: 1;
  display: flex;
  flex-direction: column;
  justify-content: space-between;
  margin: 10px 0 0 7px;
  background:
    linear-gradient(#000, #000) 168px 34px / 20px 21px no-repeat,
    repeating-linear-gradient(#3a3a3a 0 20px, #262626 20px 21px) 168px 55px / 20px 80px no-repeat,
    linear-gradient(#000, #000) 32px 113px / 25px 20px no-repeat,
    linear-gradient(#3a3a3a, #3a3a3a) 58px 113px / 140px 20px no-repeat,
    ${base};
`;
const RowMark = styled.span`
  padding-left: 34px;
  color: #777;
  font-size: 10px;
  line-height: 12px;
`;
const NewTag = styled.a`
  width: 32px;
  height: 20px;
  margin-left: 6px;
  background: #3a94ec;
  color: #fff;
  font: 11px/20px ${segoe};
  text-align: center;
  text-decoration: none;
`;
const NewMenu = () => (
  <Pin $x={1699} $y={1348} $w={202}>
    <DarkSnip $h={137}>
      <Strip><StripCell>at</StripCell></Strip>
      <DarkClient><NewTag href="#new">New</NewTag><RowMark>4</RowMark></DarkClient>
      <DropMenu $x={28} $y={31} $w={156}>
        {['New Workspace', 'Open Workspace', 'Save Workspace', 'Save As Workspace'].map(t => (
          <DropItem key={t} href="#ws" $h={23} $left={8}>{t}</DropItem>
        ))}
      </DropMenu>
    </DarkSnip>
  </Pin>
);

/* ---------- workspace dialog ---------- */
const WorkForm = styled.form`
  display: grid;
  grid-template-columns: 95px 240px;
  column-gap: 7px;
  align-content: start;
  padding: 18px 0 24px;
  font-size: 10px;
`;
const CheckRow = styled.div<{ $gap: number }>`
  display: flex;
  align-items: center;
  gap: ${p => p.$gap}px;
  padding-left: 26px;
`;
const Check = styled.input`
  appearance: none;
  display: grid;
  place-items: center;
  width: 13px;
  height: 13px;
  background: ${widget};
  &:checked::after {
    content: '';
    width: 4px;
    height: 8px;
    margin-top: -2px;
    border: solid #a5a5a5;
    border-width: 0 2px 2px 0;
    transform: rotate(40deg);
  }
`;
const Right = styled.div`
  display: flex;
  justify-content: flex-end;
  grid-column: 1 / -1;
  margin-top: 6px;
`;
const SourceGrid = styled.div`
  display: grid;
  grid-column: 1 / -1;
  grid-template-columns: 95px 238px;
  gap: 10px 7px;
  align-items: center;
  margin-top: 8px;
`;
const WideRow = styled(ButtonRow)`
  grid-column: 1 / -1;
`;
const WorkWindow = () => (
  <Pin $x={1608} $y={1596} $w={395}>
    <Backdrop $pad="2px" $bg="linear-gradient(#0c0f14, #10151c 60%, #3e4347)">
      <Frame $glass="steel" $side={5} $foot={5}>
        <TitleBar $h={28}>
          <PreviewBadge>Qt</PreviewBadge>
          <Title $size={11}>Configurate Workspace - [Preview] - Qt Desig...</Title>
          <TripleControls />
        </TitleBar>
        <Client $h={291} $font={verdana}>
          <WorkForm>
            <CheckRow $gap={11}><Check id="csv" type="checkbox" defaultChecked /><Label htmlFor="csv">CSV</Label></CheckRow>
            <Field aria-label="CSV path" $w={239} $h={18} />
            <Right><Button type="button" $w={69}>Examin</Button></Right>
            <CheckRow $gap={7}><Check id="db" type="checkbox" /><Label htmlFor="db">Database</Label></CheckRow>
            <SourceGrid>
              {['Service:', 'User:', 'Password', 'Database name:', 'Table name:'].map(t => (
                <React.Fragment key={t}><Label htmlFor={'w' + t}>{t}</Label><Field id={'w' + t} $h={18} /></React.Fragment>
              ))}
            </SourceGrid>
            <WideRow $gap={18} $mt={26} $left={112}>
              <Button type="button" $w={74}>Accept</Button>
              <Button type="button" $w={74}>Cancel</Button>
            </WideRow>
          </WorkForm>
        </Client>
      </Frame>
    </Backdrop>
  </Pin>
);

/* ---------- chart window ---------- */
const blue = '20,1256 26,1243 31,1220 42,1225 50,1198 58,1195 66,1190 72,1186 80,1195 86,1203 90,1165 97,1130 103,1118 110,1110 113,1080 120,1070 126,1080 131,1062 138,1028 144,1068 150,1036 157,1030 163,1038 169,1050 178,1012 186,985 193,960 201,950 208,955 214,968 222,968 232,998 240,965 247,925 258,908 268,890 276,876 285,920 292,895 300,885 306,912 313,860 320,825 328,812 336,850 341,800 346,792 352,815 355,770 364,785 370,788 378,825 384,780 393,757 398,800 406,845 412,825 415,858 422,825 428,812 436,808 442,852 448,856 456,803 463,795 470,770 474,785 482,750 490,762 496,748 502,760 509,747 514,830 520,825 526,870 534,820 542,842 550,805 560,795 567,785 576,800 586,830 594,810 602,800 612,832 620,808 631,790 640,845 648,880 657,832 664,850 668,915 673,880 681,925 687,855 698,855 706,815 712,830 719,822 724,780 731,768 740,780 752,762 761,785 764,730 774,712 781,728 786,718 791,735 797,692 805,680 813,655 818,632 823,650 828,625 833,650 842,628 850,640 857,597 863,622 870,598 878,628 882,592 890,615 899,598 906,610 913,640 918,700 924,738 932,690 937,712 940,690 947,715 956,760 962,715 970,672 978,680 986,640 994,612 1003,612 1010,600 1020,600 1030,565 1035,578 1045,538 1057,545 1065,508 1074,518 1083,488 1091,520 1100,470 1108,465 1115,472 1122,492 1130,455 1138,430 1147,420 1155,395 1163,440 1170,430 1180,400 1190,375 1198,378 1205,458 1215,410 1225,385 1233,362 1240,345 1248,380 1255,345 1262,342 1268,385 1275,345 1283,310 1292,318 1297,285 1305,290 1312,265 1318,290 1324,360 1330,340 1337,372 1342,338 1350,392 1357,355 1364,405 1371,355 1378,320 1388,295 1398,278 1403,308 1410,290 1418,358 1424,310 1431,330 1438,308 1448,335 1456,355 1463,330 1470,350 1478,290 1484,278 1490,272';
const red = '27,1256 34,1225 40,1235 46,1200 50,1170 56,1165 61,1128 68,1140 72,1122 80,1145 86,1150 91,1080 94,1000 100,920 104,970 109,900 114,840 119,912 124,920 130,900 138,838 144,975 149,905 156,935 162,945 168,930 173,965 180,918 187,940 195,890 202,862 208,895 212,965 218,942 224,940 232,975 240,920 245,875 255,880 262,840 268,878 276,822 282,890 286,940 293,870 302,850 308,900 315,850 322,825 328,812 336,900 342,840 350,845 355,805 362,850 370,835 378,880 386,825 393,798 398,855 405,920 411,885 415,935 421,880 430,875 436,862 442,930 448,958 456,895 463,920 470,865 477,870 483,835 488,865 497,802 504,850 508,835 513,990 517,940 526,1005 534,940 542,940 550,885 558,880 565,850 573,865 584,918 592,900 602,845 610,912 616,905 624,865 631,828 638,870 647,1010 653,960 660,970 668,1080 675,1040 681,1085 688,985 697,985 706,935 712,955 719,910 724,875 735,858 745,885 755,870 761,908 765,850 772,860 781,850 790,865 797,790 804,805 811,808 818,755 824,775 830,740 837,755 845,712 850,690 857,645 862,690 870,645 877,690 882,600 890,630 897,597 905,610 911,660 918,760 924,808 932,740 938,765 942,725 950,755 956,818 963,750 971,695 979,710 985,665 990,690 992,620 1000,610 1003,640 1008,590 1015,605 1020,580 1024,600 1028,540 1035,560 1042,510 1051,490 1058,505 1064,445 1071,415 1078,420 1084,402 1088,480 1091,530 1098,455 1106,440 1115,445 1122,492 1130,425 1140,400 1150,385 1158,378 1162,475 1168,415 1173,458 1180,400 1190,340 1198,315 1203,430 1210,380 1217,345 1226,330 1231,275 1240,250 1246,295 1252,235 1260,210 1267,262 1273,215 1277,240 1281,165 1288,125 1293,140 1297,68 1301,95 1304,85 1307,155 1311,115 1317,165 1320,270 1324,300 1330,218 1336,285 1342,230 1346,260 1350,320 1358,275 1365,355 1372,275 1378,210 1386,180 1392,175 1398,150 1403,210 1406,190 1412,260 1417,335 1425,280 1432,345 1438,292 1446,320 1453,385 1463,310 1469,398 1476,325 1482,300 1487,285 1490,298';
const green = '27,1250 34,1225 42,1235 50,1205 58,1210 66,1200 75,1205 86,1215 90,1165 98,1135 104,1145 109,1120 115,1100 121,1112 127,1118 132,1100 138,1085 145,1122 150,1095 157,1080 163,1088 168,1105 178,1075 188,1060 196,1042 204,1055 208,1040 213,1068 222,1062 232,1085 242,1050 247,1020 258,1015 266,998 275,990 281,1020 286,1050 293,1015 301,1012 306,1040 314,1005 320,960 327,945 336,985 343,955 350,965 355,940 364,970 370,975 378,1015 385,975 393,958 398,990 406,1030 412,1010 416,1048 424,1015 430,1008 437,1012 442,1045 448,1060 456,1010 463,1018 470,995 476,1010 483,985 490,1005 497,992 508,1000 514,1070 519,1062 526,1105 534,1062 543,1080 551,1042 560,1035 568,1022 577,1055 587,1085 596,1068 603,1070 611,1100 620,1075 631,1062 638,1105 648,1140 656,1108 662,1120 668,1178 676,1150 683,1178 689,1118 697,1115 705,1090 712,1100 719,1105 725,1070 735,1065 745,1085 752,1065 760,1088 765,1038 775,1028 783,1040 790,1032 797,1012 803,1018 809,985 820,975 828,985 836,975 846,985 857,945 863,970 868,955 876,975 884,965 892,990 898,972 906,985 913,1000 919,1040 925,1065 933,1040 941,1025 948,1045 956,1068 965,1035 973,1008 980,1015 988,975 997,965 1008,950 1020,945 1029,920 1037,932 1047,908 1058,925 1068,895 1076,905 1084,878 1089,890 1094,865 1103,860 1113,865 1122,880 1133,850 1142,830 1153,808 1158,815 1163,852 1168,835 1173,845 1183,825 1190,815 1198,802 1205,850 1215,825 1222,795 1232,780 1240,768 1248,800 1258,772 1268,810 1276,780 1284,760 1292,765 1300,740 1306,730 1311,695 1317,687 1325,765 1334,755 1340,768 1344,752 1350,795 1358,772 1365,818 1373,785 1382,760 1398,735 1404,748 1411,722 1419,765 1428,735 1438,720 1447,730 1454,748 1464,700 1472,700 1480,665 1485,662 1490,645';
const orange = '394,1256 400,1290 406,1305 413,1310 415,1322 422,1300 430,1290 436,1292 441,1318 448,1325 456,1290 463,1293 470,1280 474,1290 482,1268 488,1282 495,1272 508,1280 514,1338 518,1325 526,1356 534,1325 543,1338 550,1308 560,1302 568,1296 577,1320 588,1340 596,1328 602,1325 612,1352 620,1335 631,1325 638,1355 648,1378 657,1355 663,1365 668,1408 675,1385 682,1408 688,1362 697,1362 706,1340 712,1345 719,1355 725,1328 735,1325 745,1348 752,1335 760,1350 764,1315 774,1305 790,1312 797,1290 808,1278 818,1268 835,1268 848,1270 857,1242 863,1258 870,1250 880,1262 892,1270 900,1260 912,1270 918,1305 925,1325 933,1305 941,1300 948,1308 956,1326 965,1300 973,1280 981,1288 988,1260 997,1252 1008,1242 1020,1244 1030,1228 1038,1235 1047,1220 1060,1232 1068,1212 1076,1216 1084,1198 1089,1210 1094,1190 1105,1182 1122,1195 1133,1170 1142,1155 1155,1142 1162,1172 1170,1165 1185,1155 1198,1138 1205,1170 1215,1150 1222,1132 1240,1110 1248,1135 1258,1118 1268,1142 1276,1115 1284,1103 1292,1108 1306,1085 1312,1055 1317,1055 1325,1110 1342,1100 1350,1135 1357,1120 1365,1143 1374,1130 1382,1108 1398,1080 1410,1078 1419,1105 1428,1085 1440,1072 1455,1085 1464,1055 1472,1058 1480,1025 1490,1012';

const daily = (src: string, amp: number) => {
  const pts = src.split(' ').map(p => p.split(',').map(Number));
  let seed = 7;
  const rnd = () => ((seed = (seed * 16807) % 2147483647) / 2147483647) - 0.5;
  const out: string[] = [];
  pts.forEach(([x, y], i) => {
    out.push(`${x},${y}`);
    const next = pts[i + 1];
    if (!next) return;
    const n = Math.max(1, Math.round((next[0] - x) / 2.2));
    for (let k = 1; k < n; k++) {
      const t = k / n;
      out.push(`${(x + (next[0] - x) * t).toFixed(1)},${(y + (next[1] - y) * t + rnd() * amp).toFixed(1)}`);
    }
  });
  return out.join(' ');
};

const series = [
  { name: 'SBI Blue Chip Fund - Direct Plan (G)', color: '#3a78ad', pts: blue, amp: 22 },
  { name: 'Kotak Nifty ETF', color: '#e08a43', pts: orange, amp: 14 },
  { name: 'nifty 50', color: '#4b9a3f', pts: green, amp: 18 },
  { name: 'nifty midcap 50', color: '#bb3a38', pts: red, amp: 26 },
];
const yTicks: [string, number][] = [['2.50', 529], ['2.25', 601], ['2.00', 673], ['1.75', 745], ['1.50', 817], ['1.25', 889], ['1.00', 962], ['0.75', 1033]];
const xTicks: [string, number][] = [['2014-01', 143], ['2014-07', 243], ['2015-01', 344], ['2015-07', 444], ['2016-01', 546], ['2016-07', 647], ['2017-01', 749], ['2017-07', 849], ['2018-01', 951], ['2018-07', 1051]];

const ChartSvg = styled.svg`
  display: block;
  width: 100%;
  background: #fff;
  text { font-family: ${arial}; font-size: 11px; fill: #3a3a3a; }
  text.big { font-size: 13px; }
`;
const Chart = () => (
  <ChartSvg viewBox="79 457 1057 626" role="img" aria-label="Comparative returns">
    <g stroke="#d3d3d3" strokeWidth="1.500" fill="none">
      {yTicks.map(([t, y]) => <path key={t} d={`M127 ${y}H1118`} />)}
      {xTicks.map(([t, x]) => <path key={t} d={`M${x} 480V1045`} />)}
      <rect x="127" y="480" width="991" height="565" />
    </g>
    <svg x="160" y="480" width="960" height="600" viewBox="0 0 1568 1568" preserveAspectRatio="none">
      {[0, 2, 1, 3].map(i => (
        <polyline key={i} points={daily(series[i].pts, series[i].amp)} fill="none" stroke={series[i].color} strokeWidth="2" strokeLinejoin="round" vectorEffect="non-scaling-stroke" />
      ))}
    </svg>
    <text className="big" x="622" y="472" textAnchor="middle">Comparative returns</text>
    {yTicks.map(([t, y]) => <text key={t} x="123" y={y + 4} textAnchor="end">{t}</text>)}
    {xTicks.map(([t, x]) => <text key={t} x={x} y="1059" textAnchor="middle">{t}</text>)}
    <text className="big" transform="translate(95 764) rotate(-90)" textAnchor="middle">Comparative Returns</text>
    {series.map((s, i) => (
      <g key={s.name}>
        <path d={`M136 ${497 + i * 18}h23`} stroke={s.color} strokeWidth="2" />
        <text x="167" y={501 + i * 18}>{s.name}</text>
      </g>
    ))}
  </ChartSvg>
);

const ChartShell = styled.div`
  padding-left: 4px;
  border-top: 1px solid #8b97a5;
  background: linear-gradient(#96b1cf, #b8cfe8 24px, #d5e3f2 60px, #b9d0ea 70px);
`;
const ChartTitle = styled(TitleBar)`
  overflow: hidden;
`;
const StubButton = styled.button`
  align-self: flex-start;
  width: 20px;
  height: 16px;
  margin: 6px -11px 0 0;
  border: 1px solid #5f7590;
  border-radius: 2px;
  background: linear-gradient(#c8dbf0 0, #b3cae4 45%, #96b2d2 50%, #b4cee9);
`;
const ChartClient = styled.div`
  height: 760px;
  background: ${base};
  color: ${ink};
`;
const PaleTabs = styled.div`
  display: flex;
  align-items: flex-end;
  margin-top: 8px;
  padding-left: 5px;
`;
const PaleTab = styled.button<{ $w: number; $on?: boolean }>`
  width: ${p => p.$w}px;
  height: ${p => (p.$on ? 22 : 19)}px;
  border: 1px solid ${p => (p.$on ? '#fff' : '#999')};
  border-bottom: 0;
  background: ${p => (p.$on ? '#fff' : 'linear-gradient(#f2f2f2 50%, #dcdcdc 50%, #cfcfcf)')};
  color: #a9a9a9;
`;
const PalePane = styled.div`
  height: 708px;
  margin: 0 8px 0 3px;
  padding: 18px 23px 0 19px;
  border: 2px solid #fff;
  border-bottom: 0;
`;
const Selected = styled.div`
  position: relative;
  padding: 1px 2px 3px 1px;
  outline: 1px solid #6d1f22;
  outline-offset: -1px;
`;
const Handle = styled.i<{ $l: number; $t: number }>`
  position: absolute;
  left: ${p => p.$l}%;
  top: ${p => p.$t}%;
  width: 5px;
  height: 5px;
  margin: -2px;
  background: #0a0a6e;
`;
const spots: [number, number][] = [[0, 0], [50, 0], [100, 0], [0, 50], [100, 50], [0, 100], [50, 100], [100, 100]];

const ChartWindow = () => (
  <Pin $x={50} $y={359} $w={1121}>
    <ChartShell>
      <ChartTitle $h={24} $low>
        <QtBadge>Qt</QtBadge>
        <Title $size={11}>Time Visualizer - win0.ui*</Title>
        <StubButton type="button" aria-label="Minimize" />
      </ChartTitle>
      <ChartClient>
        <MenuBar $gap={16}>
          <MenuItem href="#new">New</MenuItem>
          <MenuItem href="#import">Import</MenuItem>
          <MenuItem href="#type">Type Here</MenuItem>
        </MenuBar>
        <PaleTabs>
          <PaleTab type="button" $w={88}>Selected Data</PaleTab>
          <PaleTab type="button" $w={33} $on>+</PaleTab>
        </PaleTabs>
        <PalePane>
          <Selected>
            <Chart />
            {spots.map(([l, t]) => <Handle key={l + '-' + t} $l={l} $t={t} />)}
          </Selected>
        </PalePane>
      </ChartClient>
    </ChartShell>
  </Pin>
);

/* ---------- page ---------- */
export default function App() {
  return (
    <Board>
      <Global />
      <ChartWindow />
      <GraphWindow />
      <Calendar />
      {cards.map(c => <ColorCard key={c.name} spec={c} />)}
      <MainWindow />
      <ImportMenu />
      <ImportWindow />
      <NewMenu />
      <WorkWindow />
      <Pin $x={795} $y={172}><Note $size={15}>Linear graphic</Note></Pin>
      <Highlight $x={1358} $y={413} $w={36} $h={27} />
      <Highlight $x={2013} $y={482} $w={29} $h={28} />
      <Highlight $x={1725} $y={1377} $w={113} $h={28} $line={3} />
      <Arrows>
        <g fill="none" stroke="#000" strokeWidth="3" strokeLinecap="round" strokeLinejoin="round">
          <path d="M1194 139C1040 156 835 205 656 337M661 314Q652 333 650 342Q654 345 679 330" />
          <path d="M1799 1261V1340M1788 1321Q1794 1338 1799 1341Q1804 1338 1814 1321" />
          <path d="M1800 1493V1580M1792 1546Q1795 1572 1800 1583Q1806 1572 1811 1546" />
          <path d="M2711 799V873M2702 852Q2705 870 2711 879Q2718 870 2725 852" />
          <path d="M2479 733H2596M2557 722Q2590 727 2598 733Q2590 739 2557 745" />
        </g>
        <g stroke={mark} strokeWidth="1">
          <path d="M1376.500 283V411M2026.500 302V479" />
        </g>
      </Arrows>
    </Board>
  );
}
